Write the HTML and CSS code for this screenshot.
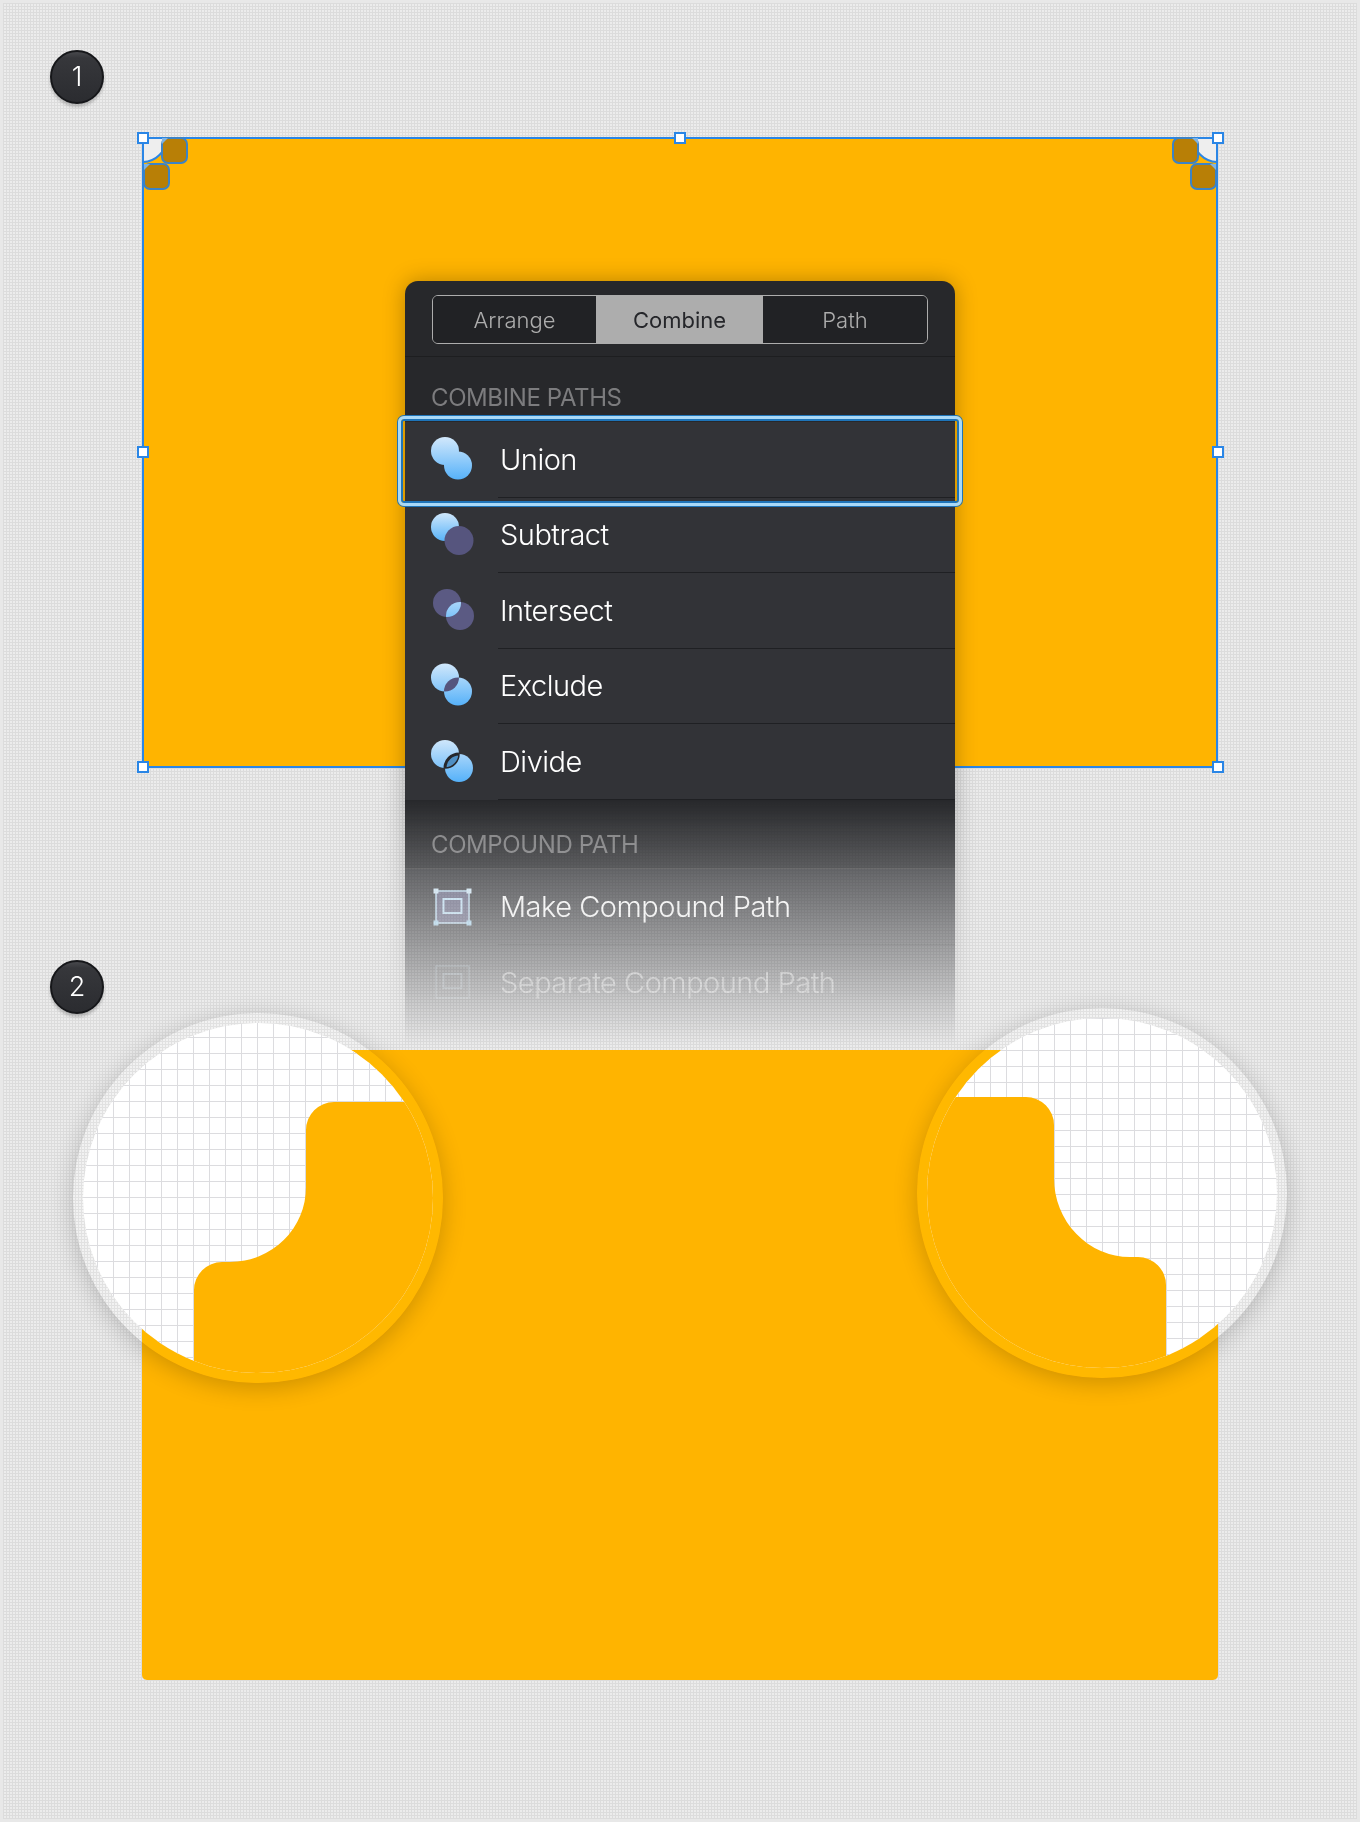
FILE: index.html
```html
<!DOCTYPE html>
<html lang="en">
<head>
    <meta charset="UTF-8">
    <meta name="viewport" content="width=device-width, initial-scale=1.0">
    <title>Combine Paths</title>
    <link rel="stylesheet" href="styles.css">
</head>
<body>

<div class="badge badge-one">1</div>
<div class="badge badge-two">2</div>

<div class="artboard">
    <svg class="corner corner-left" viewBox="0 0 48 55">
        <path d="M1 1H25A25 25 0 0 1 1 25Z" fill="#eeeeee" stroke="#2a86e6" stroke-width="2"/>
        <rect x="20" y="1" width="25" height="25" rx="6" fill="#b87f06" stroke="#3c83c6" stroke-width="2"/>
        <rect x="2" y="27" width="25" height="25" rx="6" fill="#b87f06" stroke="#3c83c6" stroke-width="2"/>
        <path d="M20 1H26L20 7Z" fill="#7fb4e4"/>
        <path d="M2 27H8L2 33Z" fill="#7fb4e4"/>
    </svg>
    <svg class="corner corner-right" viewBox="0 0 48 55">
        <path d="M1 1H25A25 25 0 0 1 1 25Z" fill="#eeeeee" stroke="#2a86e6" stroke-width="2"/>
        <rect x="20" y="1" width="25" height="25" rx="6" fill="#b87f06" stroke="#3c83c6" stroke-width="2"/>
        <rect x="2" y="27" width="25" height="25" rx="6" fill="#b87f06" stroke="#3c83c6" stroke-width="2"/>
        <path d="M20 1H26L20 7Z" fill="#7fb4e4"/>
        <path d="M2 27H8L2 33Z" fill="#7fb4e4"/>
    </svg>
</div>
<span class="handle h-tl"></span>
<span class="handle h-tc"></span>
<span class="handle h-tr"></span>
<span class="handle h-ml"></span>
<span class="handle h-mr"></span>
<span class="handle h-bl"></span>
<span class="handle h-br"></span>

<div class="panel">
    <div class="tabs-bar">
        <div class="tabs">
            <span class="tab">Arrange</span>
            <span class="tab tab-active">Combine</span>
            <span class="tab">Path</span>
        </div>
    </div>

    <div class="section-title section-first">COMBINE PATHS</div>

    <div class="row row-focused">
        <svg class="row-icon" viewBox="0 0 48 48">
            <defs>
                <linearGradient id="blue" x1="0" y1="0" x2="0" y2="1">
                    <stop offset="0" stop-color="#cfe7fb"/>
                    <stop offset="1" stop-color="#58b3f9"/>
                </linearGradient>
                <linearGradient id="blueWide" gradientUnits="userSpaceOnUse" x1="0" y1="1" x2="0" y2="44">
                    <stop offset="0" stop-color="#d2e8fb"/>
                    <stop offset="1" stop-color="#55b1f9"/>
                </linearGradient>
            </defs>
            <circle cx="17" cy="15" r="14" fill="url(#blueWide)"/>
            <circle cx="30" cy="29.5" r="14" fill="url(#blueWide)"/>
        </svg>
        <div class="row-label">Union</div>
        <div class="row-focus"></div>
    </div>
    <div class="row">
        <svg class="row-icon" viewBox="0 0 48 48">
            <circle cx="17" cy="16" r="14" fill="url(#blue)"/>
            <circle cx="31" cy="29.5" r="14.5" fill="#56557e"/>
        </svg>
        <div class="row-label">Subtract</div>
    </div>
    <div class="row">
        <svg class="row-icon" viewBox="0 0 48 48">
            <defs>
                <clipPath id="clipIntersect"><circle cx="19" cy="16" r="14"/></clipPath>
            </defs>
            <circle cx="19" cy="16" r="14" fill="#5b5a83"/>
            <circle cx="32" cy="29" r="14" fill="#5b5a83"/>
            <circle cx="32" cy="29" r="14" fill="url(#blueWide)" clip-path="url(#clipIntersect)"/>
        </svg>
        <div class="row-label">Intersect</div>
    </div>
    <div class="row">
        <svg class="row-icon" viewBox="0 0 48 48">
            <defs>
                <clipPath id="clipExclude"><circle cx="17" cy="15.5" r="14"/></clipPath>
            </defs>
            <circle cx="17" cy="15.5" r="14" fill="url(#blueWide)"/>
            <circle cx="30" cy="29.5" r="14" fill="url(#blueWide)"/>
            <circle cx="30" cy="29.5" r="14" fill="#55547d" clip-path="url(#clipExclude)"/>
        </svg>
        <div class="row-label">Exclude</div>
    </div>
    <div class="row">
        <svg class="row-icon" viewBox="0 0 48 48">
            <defs>
                <clipPath id="clipDivide"><circle cx="17" cy="16" r="14"/></clipPath>
                <clipPath id="clipDivideTwo"><circle cx="31" cy="30" r="14"/></clipPath>
            </defs>
            <circle cx="17" cy="16" r="14" fill="url(#blueWide)"/>
            <circle cx="31" cy="30" r="14" fill="url(#blueWide)"/>
            <circle cx="31" cy="30" r="14" fill="#4f8fc4" stroke="#26272b" stroke-width="3" clip-path="url(#clipDivide)"/>
            <circle cx="17" cy="16" r="14" fill="none" stroke="#26272b" stroke-width="1.5" clip-path="url(#clipDivideTwo)"/>
        </svg>
        <div class="row-label">Divide</div>
    </div>

    <div class="section-title section-second">COMPOUND PATH</div>

    <div class="row">
        <svg class="row-icon" viewBox="0 0 48 48">
            <rect x="8" y="8" width="33" height="32" fill="#6f6f96" fill-opacity=".75" stroke="#bcdff6" stroke-width="1.5"/>
            <rect x="15.5" y="16" width="18" height="14" fill="none" stroke="#bcdff6" stroke-width="2"/>
            <rect x="5.5" y="5.5" width="5" height="5" fill="#cfe7f8"/>
            <rect x="38.5" y="5.5" width="5" height="5" fill="#cfe7f8"/>
            <rect x="5.5" y="37.5" width="5" height="5" fill="#a5d6f3"/>
            <rect x="38.5" y="37.5" width="5" height="5" fill="#a5d6f3"/>
        </svg>
        <div class="row-label">Make Compound Path</div>
    </div>
    <div class="row row-disabled">
        <svg class="row-icon" viewBox="0 0 48 48">
            <rect x="8" y="8" width="33" height="32" fill="none" stroke="#bcdff6" stroke-width="1.5"/>
            <rect x="15.5" y="16" width="18" height="14" fill="none" stroke="#bcdff6" stroke-width="2"/>
        </svg>
        <div class="row-label">Separate Compound Path</div>
    </div>
</div>
<div class="panel-fade"></div>

<div class="artboard-full"></div>

<div class="lens lens-left">
    <div class="lens-view">
        <svg viewBox="0 0 350 350">
            <path d="M111 350V267A28 28 0 0 1 139 239H147A76 75 0 0 0 223 164V107A28 28 0 0 1 251 79H350V350Z" fill="#ffb400"/>
        </svg>
    </div>
</div>
<div class="lens lens-right">
    <div class="lens-view">
        <svg viewBox="0 0 350 350">
            <path d="M0 79H99A28 28 0 0 1 127 107V160A76 79 0 0 0 203 239H211A28 28 0 0 1 239 267V350H0Z" fill="#ffb400"/>
        </svg>
    </div>
</div>

</body>
</html>
```

FILE: styles.css
```css
body {
    margin: 0;
    height: 1822px;
    position: relative;
    overflow: hidden;
    font-family: Inter, "Liberation Sans", sans-serif;
    background-color: #ececec;
    background-image:
        linear-gradient(#dcdcdc 1px, transparent 1px),
        linear-gradient(90deg, #dcdcdc 1px, transparent 1px);
    background-size: 3px 3px;
    box-shadow: inset 0 0 0 3px #e8e8e8;
}

.badge {
    position: absolute;
    left: 50px;
    width: 50px;
    height: 50px;
    border: 2px solid #16171a;
    border-radius: 50%;
    background: linear-gradient(#47484c, #36373b 12%, #2b2c30);
    box-shadow: 0 3px 3px rgba(0, 0, 0, 0.2);
    color: #fff;
    font-size: 27px;
    font-weight: 300;
    line-height: 50px;
    text-align: center;
}
.badge-one { top: 50px; }
.badge-two { top: 960px; }

.artboard {
    position: absolute;
    left: 142px;
    top: 137px;
    width: 1076px;
    height: 631px;
    box-sizing: border-box;
    border: 2px solid #2a86e6;
    background: #ffb400;
}
.corner {
    position: absolute;
    top: -2px;
    width: 48px;
    height: 55px;
}
.corner-left { left: -2px; }
.corner-right { right: -2px; transform: scaleX(-1); }

.handle {
    position: absolute;
    width: 8px;
    height: 8px;
    margin: -6px 0 0 -6px;
    border: 2px solid #2a86e6;
    background: #fff;
}
.h-tl { left: 143px; top: 138px; }
.h-tc { left: 680px; top: 138px; }
.h-tr { left: 1218px; top: 138px; }
.h-ml { left: 143px; top: 452px; }
.h-mr { left: 1218px; top: 452px; }
.h-bl { left: 143px; top: 767px; }
.h-br { left: 1218px; top: 767px; }

.panel {
    position: absolute;
    left: 405px;
    top: 281px;
    width: 550px;
    height: 769px;
    background: #27282b;
    border-radius: 13px 13px 0 0;
    box-shadow: 0 0 22px rgba(0, 0, 0, 0.28);
}
.tabs-bar {
    height: 76px;
    padding: 14px 0 0 27px;
    box-sizing: border-box;
    border-bottom: 1px solid #1d1e20;
}
.tabs {
    display: grid;
    grid-template-columns: 163px 167px 1fr;
    width: 496px;
    height: 49px;
    box-sizing: border-box;
    border: 1.5px solid #adadad;
    border-radius: 6px;
    overflow: hidden;
}
.tab {
    display: flex;
    align-items: center;
    justify-content: center;
    color: #adadad;
    font-size: 22px;
    font-weight: 300;
    background: #212225;
}
.tab-active {
    background: #adadad;
    color: #25262a;
    font-weight: 400;
}

.section-title {
    box-sizing: border-box;
    display: flex;
    align-items: center;
    padding-left: 26px;
    color: #7c7c7e;
    font-size: 24px;
    letter-spacing: -0.4px;
}
.section-first { height: 65px; padding-top: 16px; }
.section-second {
    height: 69.5px;
    padding-top: 22px;
    border-bottom: 1px solid #3c3c3e;
}

.row {
    position: relative;
    display: flex;
    align-items: center;
    height: 75.5px;
    padding-left: 23px;
    background: #323337;
}
.row-focused { z-index: 1; }
.row-icon {
    flex: none;
    width: 48px;
    height: 48px;
    margin-right: 22px;
}
.row-label {
    flex: 1;
    display: flex;
    align-items: center;
    align-self: stretch;
    padding-left: 2px;
    color: #fff;
    font-size: 29px;
    font-weight: 300;
    letter-spacing: -0.5px;
    border-bottom: 1px solid #1f2023;
}
.row-disabled .row-label { color: rgba(255, 255, 255, 0.55); border: 0; }
.row-disabled .row-icon { opacity: 0.3; }
.row-focus {
    position: absolute;
    left: -7px;
    right: -7px;
    top: -6px;
    bottom: -8.5px;
    border: 3px solid #a9d9f7;
    border-radius: 6px;
    box-shadow: 0 0 0 1px #1e74b8, inset 0 0 0 2px #1e74b8;
}

.panel-fade {
    position: absolute;
    left: 375px;
    top: 798px;
    width: 615px;
    height: 252px;
    background-color: #ececec;
    background-image:
        linear-gradient(#dcdcdc 1px, transparent 1px),
        linear-gradient(90deg, #dcdcdc 1px, transparent 1px);
    background-size: 3px 3px;
    -webkit-mask-image: linear-gradient(transparent 2px, #000 247px);
    mask-image: linear-gradient(transparent 2px, #000 247px);
}

/* top corners are notched in the real shape, the lenses sit over them */
.artboard-full {
    position: absolute;
    left: 142px;
    top: 1050px;
    width: 1076px;
    height: 630px;
    background: #ffb400;
    border-radius: 40px 40px 5px 5px;
}

.lens {
    position: absolute;
    width: 370px;
    height: 370px;
    border-radius: 50%;
    box-shadow: 0 5px 24px rgba(0, 0, 0, 0.2);
}
.lens::before {
    content: "";
    position: absolute;
    inset: 0;
    border: 10px solid #060606;
    border-radius: 50%;
    mix-blend-mode: color-dodge;
}
.lens-left { left: 73px; top: 1013px; }
.lens-right { left: 917px; top: 1008px; }
.lens-view {
    position: absolute;
    inset: 10px;
    clip-path: circle(50%);
    background-color: #fff;
    background-image:
        linear-gradient(#dcdcdf 1.4px, transparent 1.4px),
        linear-gradient(90deg, #dcdcdf 1.4px, transparent 1.4px);
    background-size: 16px 16px;
}
.lens-left .lens-view { background-position: 14px 14px; }
.lens-right .lens-view { background-position: 15px 0; }
.lens-view svg {
    display: block;
    width: 350px;
    height: 350px;
}
```
